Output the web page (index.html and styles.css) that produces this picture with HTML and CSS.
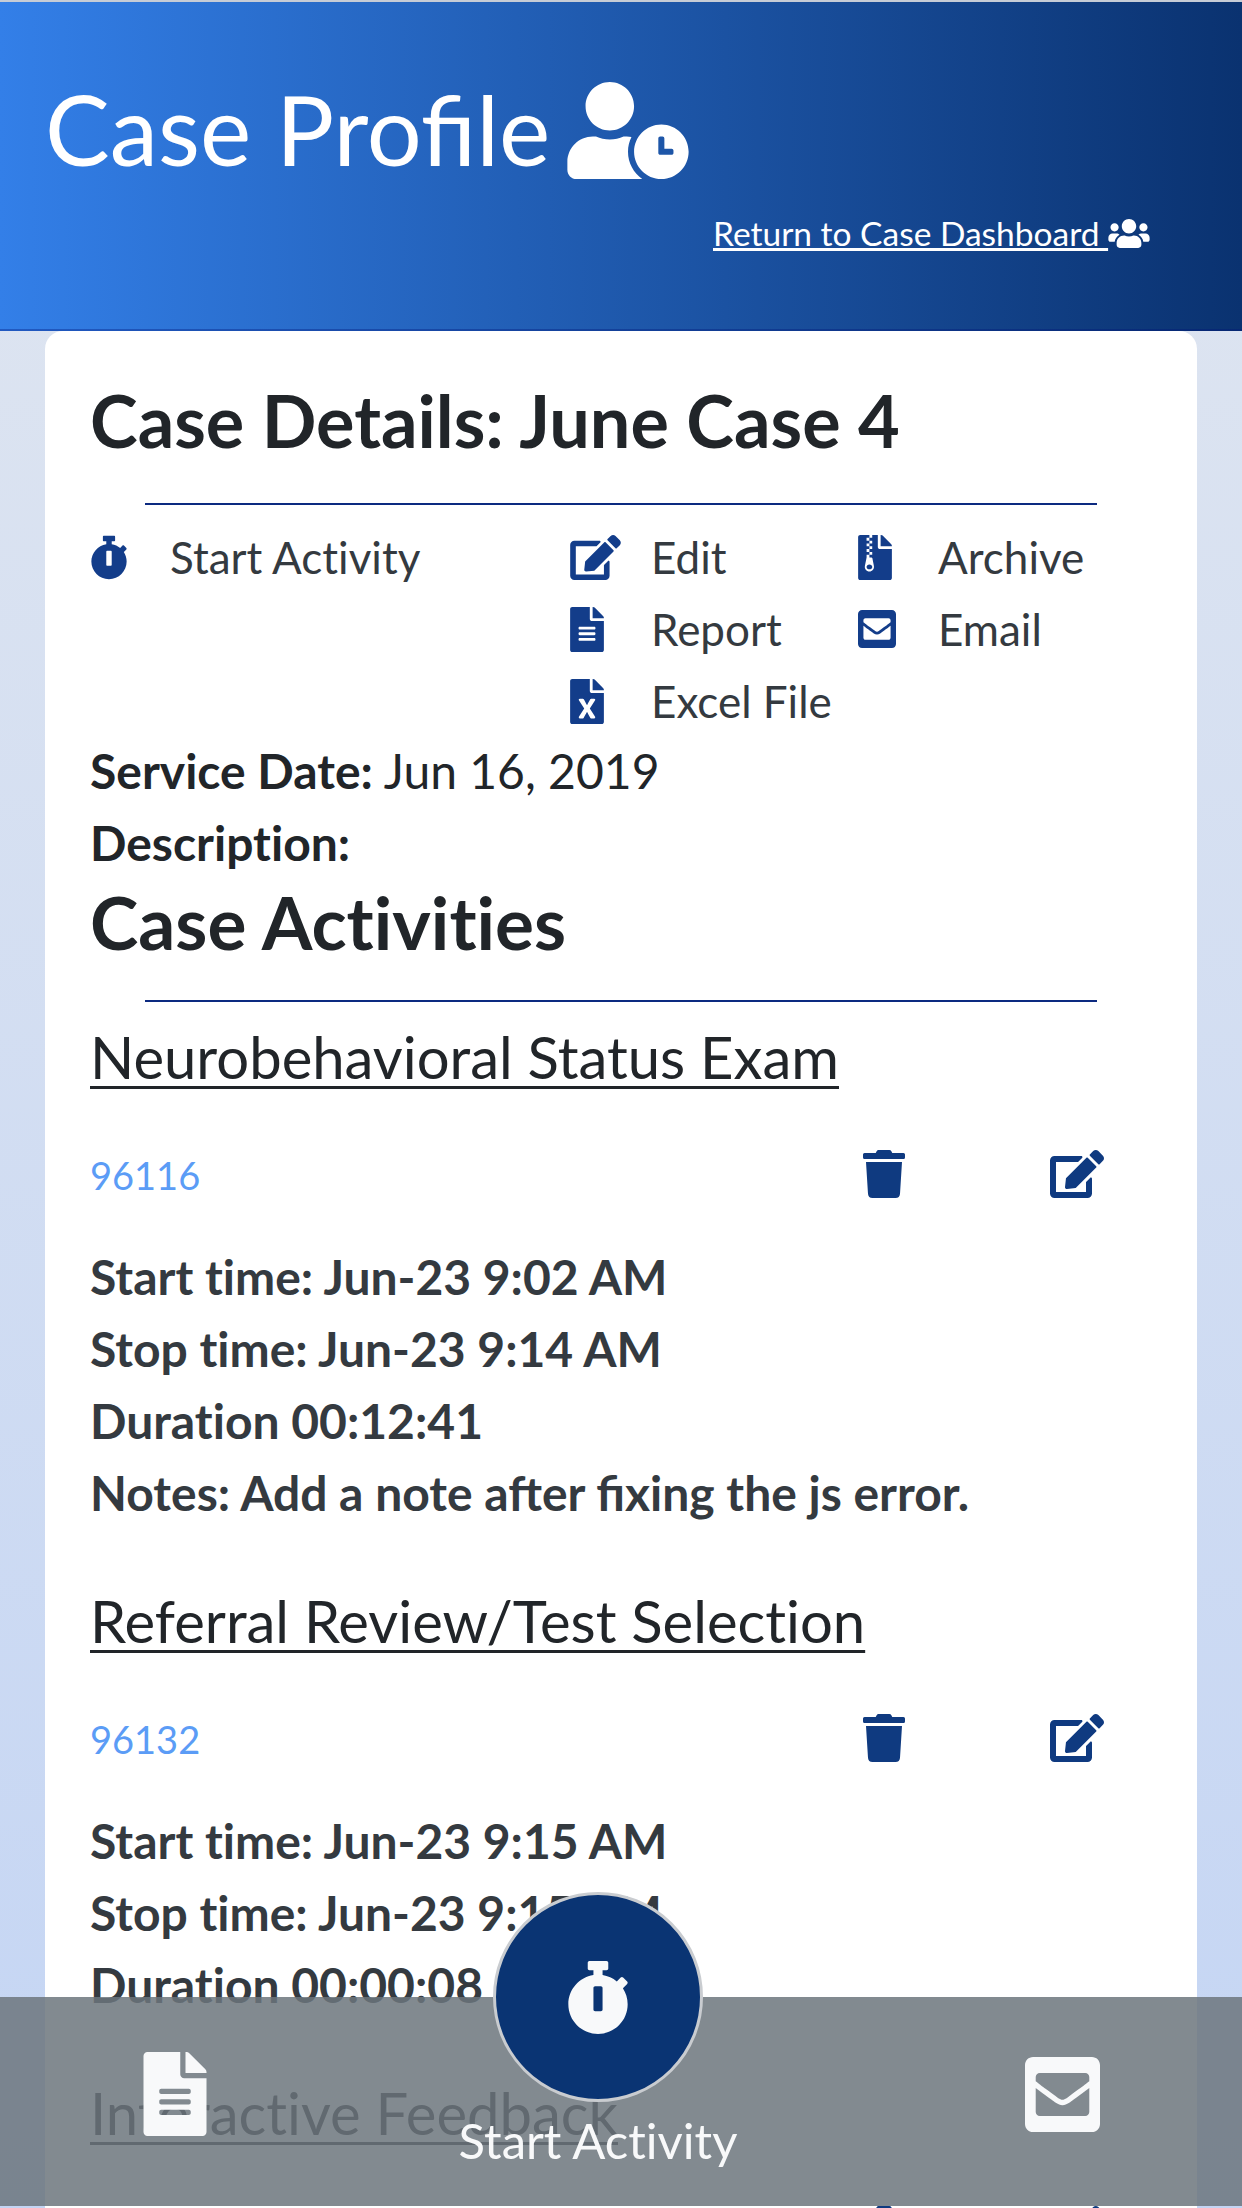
FILE: index.html
```html
<!DOCTYPE html>
<html lang="en">
<head>
  <meta charset="UTF-8">
  <meta name="viewport" content="width=device-width, initial-scale=1.0">
  <title>Case Profile</title>
  <link rel="stylesheet" href="styles.css">
</head>
<body>
  <svg class="icon-defs" aria-hidden="true">
    <symbol id="i-stopwatch" viewBox="0 0 448 512"><path d="M432 304c0 114.9-93.1 208-208 208S16 418.9 16 304c0-104 76.3-190.2 176-205.5V64h-28c-6.6 0-12-5.4-12-12V12c0-6.6 5.4-12 12-12h120c6.6 0 12 5.4 12 12v40c0 6.6-5.4 12-12 12h-28v34.5c37.5 5.8 71.7 21.6 99.7 44.6l27.5-27.5c4.7-4.7 12.3-4.7 17 0l28.3 28.3c4.7 4.7 4.7 12.3 0 17l-29.4 29.4-.6.6C419.7 223.3 432 262.2 432 304zm-176 36V188.5c0-6.6-5.4-12-12-12h-40c-6.6 0-12 5.4-12 12V340c0 6.6 5.4 12 12 12h40c6.6 0 12-5.4 12-12z"/></symbol>
    <symbol id="i-edit" viewBox="0 0 576 512"><path d="M402.6 83.2l90.2 90.2c3.8 3.8 3.8 10 0 13.8L274.4 405.6l-92.8 10.3c-12.4 1.4-22.9-9.1-21.5-21.5l10.3-92.8L388.8 83.2c3.8-3.8 10-3.8 13.8 0zm162-22.9l-48.8-48.8c-15.2-15.2-39.9-15.2-55.2 0l-35.4 35.4c-3.8 3.8-3.8 10 0 13.8l90.2 90.2c3.8 3.8 10 3.8 13.8 0l35.4-35.4c15.2-15.3 15.2-40 0-55.2zM384 346.2V448H64V128h229.8c3.2 0 6.2-1.3 8.5-3.5l40-40c7.6-7.6 2.2-20.5-8.5-20.5H48C21.5 64 0 85.5 0 112v352c0 26.5 21.5 48 48 48h352c26.5 0 48-21.5 48-48V306.2c0-10.7-12.9-16-20.5-8.5l-40 40c-2.2 2.3-3.5 5.3-3.5 8.5z"/></symbol>
    <symbol id="i-file-alt" viewBox="0 0 384 512"><path d="M224 136V0H24C10.7 0 0 10.7 0 24v464c0 13.3 10.7 24 24 24h336c13.3 0 24-10.7 24-24V160H248c-13.2 0-24-10.8-24-24zm64 236c0 6.6-5.4 12-12 12H108c-6.6 0-12-5.4-12-12v-8c0-6.6 5.4-12 12-12h168c6.6 0 12 5.4 12 12v8zm0-64c0 6.6-5.4 12-12 12H108c-6.6 0-12-5.4-12-12v-8c0-6.6 5.4-12 12-12h168c6.6 0 12 5.4 12 12v8zm0-72v8c0 6.6-5.4 12-12 12H108c-6.6 0-12-5.4-12-12v-8c0-6.6 5.4-12 12-12h168c6.6 0 12 5.4 12 12zm96-114.1v6.1H256V0h6.1c6.4 0 12.5 2.5 17 7l97.9 98c4.5 4.5 7 10.6 7 16.9z"/></symbol>
    <symbol id="i-file-excel" viewBox="0 0 384 512"><path d="M224 136V0H24C10.7 0 0 10.7 0 24v464c0 13.3 10.7 24 24 24h336c13.3 0 24-10.7 24-24V160H248c-13.2 0-24-10.8-24-24zm60.1 106.5L224 336l60.1 93.5c5.1 8-.6 18.5-10.1 18.5h-34.9c-4.4 0-8.5-2.4-10.6-6.3C208.9 405.5 192 373 192 373c-6.4 14.8-10 20-36.6 68.8-2.1 3.9-6.1 6.3-10.5 6.3H110c-9.5 0-15.2-10.5-10.1-18.5l60.3-93.5-60.3-93.5c-5.2-8 .6-18.5 10.1-18.5h34.8c4.4 0 8.5 2.4 10.6 6.3 26.1 48.8 20 33.6 36.6 68.5 0 0 6.1-11.7 36.6-68.5 2.1-3.9 6.2-6.3 10.6-6.3H274c9.5-.1 15.2 10.4 10.1 18.4zM384 121.9v6.1H256V0h6.1c6.4 0 12.5 2.5 17 7l97.9 98c4.5 4.5 7 10.6 7 16.9z"/></symbol>
    <symbol id="i-file-archive" viewBox="0 0 384 512"><path d="M377 105L279.1 7c-4.5-4.5-10.6-7-17-7H256v128h128v-6.1c0-6.3-2.5-12.4-7-16.9zM128.4 336c-17.9 0-32.4 12.1-32.4 27 0 15 14.6 27 32.5 27s32.4-12.1 32.4-27-14.6-27-32.5-27zM224 136V0h-63.6v32h-32V0H24C10.7 0 0 10.7 0 24v464c0 13.3 10.7 24 24 24h336c13.3 0 24-10.7 24-24V160H248c-13.2 0-24-10.8-24-24zM95.9 32h32v32h-32zm32.3 384c-33.2 0-58-30.4-51.4-62.9L96.4 256v-32h32v-32h-32v-32h32v-32h-32V96h32V64h32v32h-32v32h32v32h-32v32h32v32h-32v32h22.1c5.7 0 10.7 4.1 11.8 9.7l17.3 87.7c6.4 32.4-18.4 62.6-51.4 62.6z"/></symbol>
    <symbol id="i-envelope-square" viewBox="0 32 448 448"><path d="M400 32H48C21.49 32 0 53.49 0 80v352c0 26.51 21.49 48 48 48h352c26.51 0 48-21.49 48-48V80c0-26.51-21.49-48-48-48zM178.117 262.104C87.429 196.287 88.353 196.121 64 177.167V152c0-13.255 10.745-24 24-24h272c13.255 0 24 10.745 24 24v25.167c-24.371 18.969-23.434 19.124-114.117 84.938-10.5 7.655-31.392 26.12-45.883 25.894-14.503.218-35.367-18.227-45.883-25.895zM384 217.775V360c0 13.255-10.745 24-24 24H88c-13.255 0-24-10.745-24-24V217.775c13.958 10.794 33.329 25.236 95.303 70.214 14.162 10.341 37.975 32.145 64.694 32.010 26.887.134 51.037-22.041 64.72-32.025 61.958-44.965 81.325-59.406 95.283-70.199z"/></symbol>
    <symbol id="i-trash" viewBox="0 0 448 512"><path d="M432 32H312l-9.4-18.7A24 24 0 0 0 281.1 0H166.8a23.72 23.72 0 0 0-21.4 13.3L136 32H16A16 16 0 0 0 0 48v32a16 16 0 0 0 16 16h416a16 16 0 0 0 16-16V48a16 16 0 0 0-16-16zM53.2 467a48 48 0 0 0 47.9 45h245.8a48 48 0 0 0 47.9-45L416 128H32z"/></symbol>
    <symbol id="i-users" viewBox="0 0 640 512"><path d="M96 224c35.3 0 64-28.7 64-64s-28.7-64-64-64-64 28.7-64 64 28.7 64 64 64zm448 0c35.3 0 64-28.7 64-64s-28.7-64-64-64-64 28.7-64 64 28.7 64 64 64zm32 32h-64c-17.6 0-33.5 7.1-45.1 18.6 40.3 22.1 68.9 62 75.1 109.4h66c17.7 0 32-14.3 32-32v-32c0-35.3-28.7-64-64-64zm-256 0c61.9 0 112-50.1 112-112S381.9 32 320 32 208 82.1 208 144s50.1 112 112 112zm76.8 32h-8.3c-20.8 10-43.9 16-68.5 16s-47.6-6-68.5-16h-8.3C179.6 288 128 339.6 128 403.2V432c0 26.5 21.5 48 48 48h288c26.5 0 48-21.5 48-48v-28.8c0-63.6-51.6-115.2-115.2-115.2zm-223.7-13.4C161.5 263.1 145.6 256 128 256H64c-35.3 0-64 28.7-64 64v32c0 17.7 14.3 32 32 32h65.9c6.3-47.4 34.9-87.3 75.2-109.4z"/></symbol>
    <symbol id="i-user-clock" viewBox="0 0 640 512"><path d="M496 224c-79.6 0-144 64.4-144 144s64.4 144 144 144 144-64.4 144-144-64.4-144-144-144zm64 150.3c0 5.3-4.4 9.7-9.7 9.7h-60.6c-5.3 0-9.7-4.4-9.7-9.7v-76.6c0-5.3 4.4-9.7 9.7-9.7h12.6c5.3 0 9.7 4.4 9.7 9.7V352h38.3c5.3 0 9.7 4.4 9.7 9.7v12.6zM320 368c0-27.8 6.7-54.1 18.2-77.5-8-1.5-16.2-2.5-24.6-2.5h-16.7c-22.2 10.2-46.9 16-72.9 16s-50.6-5.8-72.9-16h-16.7C60.2 288 0 348.2 0 422.4V464c0 26.5 21.5 48 48 48h347.1c-45.3-31.9-75.1-84.5-75.1-144zm-96-112c70.7 0 128-57.3 128-128S294.7 0 224 0 96 57.3 96 128s57.3 128 128 128z"/></symbol>
  </svg>

  <header class="case-header">
    <h1 class="page-title">Case Profile <svg class="title-icon"><use href="#i-user-clock"/></svg></h1>
    <div class="return-row">
      <a class="return-link" href="#">Return to Case Dashboard </a>
      <svg class="return-icon"><use href="#i-users"/></svg>
    </div>
  </header>

  <main class="card">
    <h2 class="section-title details-title">Case Details: June Case 4</h2>
    <hr class="rule">

    <div class="actions">
      <a class="action action-start" href="#"><svg class="action-icon stopwatch"><use href="#i-stopwatch"/></svg>Start Activity</a>
      <a class="action" href="#"><svg class="action-icon wide"><use href="#i-edit"/></svg>Edit</a>
      <a class="action" href="#"><svg class="action-icon narrow"><use href="#i-file-archive"/></svg>Archive</a>
      <a class="action" href="#"><svg class="action-icon"><use href="#i-file-alt"/></svg>Report</a>
      <a class="action" href="#"><svg class="action-icon mail"><use href="#i-envelope-square"/></svg>Email</a>
      <a class="action" href="#"><svg class="action-icon"><use href="#i-file-excel"/></svg>Excel File</a>
    </div>

    <p class="detail service-date"><b>Service Date:</b> Jun 16, 2019</p>
    <p class="detail"><b>Description:</b></p>

    <h2 class="section-title activities-title">Case Activities</h2>
    <hr class="rule">

    <section class="activity">
      <h3 class="activity-name">Neurobehavioral Status Exam</h3>
      <div class="code-row">
        <a class="code" href="#">96116</a>
        <svg class="row-icon trash"><use href="#i-trash"/></svg>
        <svg class="row-icon pen"><use href="#i-edit"/></svg>
      </div>
      <p class="fact">Start time: Jun-23 9:02 AM</p>
      <p class="fact">Stop time: Jun-23 9:14 AM</p>
      <p class="fact">Duration 00:12:41</p>
      <p class="fact note">Notes: Add a note after fixing the js error.</p>
    </section>

    <section class="activity">
      <h3 class="activity-name">Referral Review/Test Selection</h3>
      <div class="code-row">
        <a class="code" href="#">96132</a>
        <svg class="row-icon trash"><use href="#i-trash"/></svg>
        <svg class="row-icon pen"><use href="#i-edit"/></svg>
      </div>
      <p class="fact">Start time: Jun-23 9:15 AM</p>
      <p class="fact">Stop time: Jun-23 9:15 AM</p>
      <p class="fact">Duration 00:00:08</p>
    </section>

    <section class="activity">
      <h3 class="activity-name">Interactive Feedback</h3>
      <div class="code-row">
        <span class="code"></span>
        <svg class="row-icon trash"><use href="#i-trash"/></svg>
        <svg class="row-icon pen"><use href="#i-edit"/></svg>
      </div>
    </section>
  </main>

  <nav class="bottom-bar">
    <svg class="bar-file"><use href="#i-file-alt"/></svg>
    <div class="bar-start">
      <span class="start-circle"><svg class="start-icon"><use href="#i-stopwatch"/></svg></span>
      <span class="start-label">Start Activity</span>
    </div>
    <svg class="bar-mail"><use href="#i-envelope-square"/></svg>
  </nav>
</body>
</html>
```

FILE: styles.css
```css
/* Global Styles */
html, body {
  height: 2208px;
  overflow: hidden;
}

body {
  font-family: 'Lato', 'Liberation Sans', sans-serif;
  font-variant-ligatures: none;
  margin: 0;
  background: linear-gradient(180deg, #e0e6f0 0%, #c4d5f4 100%);
  color: #212529;
  font-size: 48px;
  line-height: 72px;
  position: relative;
}

svg {
  fill: currentColor;
  display: block;
}

.icon-defs {
  display: none;
}

p, h1, h2, h3 {
  margin: 0;
}

/* Header */
.case-header {
  height: 331px;
  box-sizing: border-box;
  border-top: 2px solid #c6ccd6;
  border-bottom: 2px solid rgba(0, 20, 120, 0.35);
  background: linear-gradient(90deg, #337fe8 0%, #0a3270 100%);
  color: #fff;
  padding: 71px 0 0 45px;
}

.page-title {
  display: flex;
  align-items: flex-start;
  font-size: 97px;
  font-variant-ligatures: normal;
  font-weight: 400;
  line-height: 112px;
}

.title-icon {
  width: 122px;
  height: 97px;
  margin: 9px 0 0 17px;
}

.return-row {
  display: flex;
  align-items: center;
  margin: 26px 0 0 668px;
}

.return-link {
  color: #fff;
  font-size: 33.5px;
  line-height: 44px;
  white-space: pre;
}

.return-icon {
  width: 42px;
  height: 33px;
}

/* Card */
.card {
  width: 1152px;
  box-sizing: border-box;
  margin-left: 45px;
  padding: 46px 46px 0 45px;
  background-color: #fff;
  border-radius: 18px 18px 0 0;
}

.section-title {
  font-size: 72px;
  font-weight: 700;
}

.details-title {
  line-height: 86px;
  margin-bottom: 40px;
}

.activities-title {
  font-size: 73px;
  line-height: 80px;
  margin: 3px 0 38px;
}

.rule {
  width: 952px;
  height: 2px;
  border: 0;
  background-color: #0c2a80;
  margin: 0 0 19px 55px;
}

.details-title + .rule {
  margin-bottom: 16px;
}

/* Action links */
.actions {
  display: grid;
  grid-template-columns: 480px 288px 1fr;
  margin-bottom: -2px;
  font-size: 44px;
}

.action {
  display: flex;
  align-items: center;
  color: #343a40;
  text-decoration: none;
}

.action-start {
  grid-row: span 3;
  align-self: start;
}

.action-icon {
  flex: none;
  width: 34px;
  height: 45px;
  margin-right: 47px;
  color: #133d8a;
}

.action-icon.narrow {
  margin-right: 46px;
}

.action-icon.stopwatch {
  width: 38px;
  margin-right: 42px;
}

.action-icon.wide {
  width: 51px;
  margin-right: 30px;
}

.action-icon.mail {
  width: 38px;
  height: 38px;
  margin-right: 42px;
}

.detail {
  color: #212529;
}

/* Activities */
.activity {
  margin-bottom: 56px;
}

.activity-name {
  font-size: 58px;
  font-weight: 400;
  text-decoration: underline;
  text-decoration-thickness: 3px;
  text-underline-offset: 7px;
  margin-bottom: 46px;
}

.code-row {
  display: flex;
  align-items: center;
  height: 72px;
  margin-bottom: 30px;
}

.code {
  flex: 1;
  color: #5b9cf6;
  font-size: 38px;
  text-decoration: none;
}

.row-icon {
  color: #0f3a80;
  margin-top: -3px;
}

.trash {
  width: 42px;
  height: 48px;
}

.pen {
  width: 54px;
  height: 48px;
  margin: -3px 47px 0 145px;
}

.fact {
  color: #343a40;
  font-weight: 700;
}

.note {
  font-variant-ligatures: normal;
}

/* Bottom bar, sits over the page */
.bottom-bar {
  position: absolute;
  left: 0;
  right: 0;
  bottom: 2px;
  height: 209px;
  background-color: rgba(108, 117, 125, 0.85);
  color: #f8f9fa;
}

.bar-file {
  position: absolute;
  left: 143px;
  top: 55px;
  width: 64px;
  height: 84px;
}

.bar-mail {
  position: absolute;
  left: 1025px;
  top: 60px;
  width: 75px;
  height: 75px;
}

.bar-start {
  position: absolute;
  left: 493px;
  top: -105px;
  width: 210px;
  display: flex;
  flex-direction: column;
  align-items: center;
}

.start-circle {
  flex: none;
  width: 210px;
  height: 210px;
  box-sizing: border-box;
  border: 3px solid #c9ccd0;
  border-radius: 50%;
  background-color: #0a3473;
  display: flex;
  align-items: center;
  justify-content: center;
}

.start-icon {
  width: 64px;
  height: 73px;
}

.start-label {
  font-size: 49px;
  line-height: 60px;
  margin-top: 8px;
  white-space: nowrap;
}
```
